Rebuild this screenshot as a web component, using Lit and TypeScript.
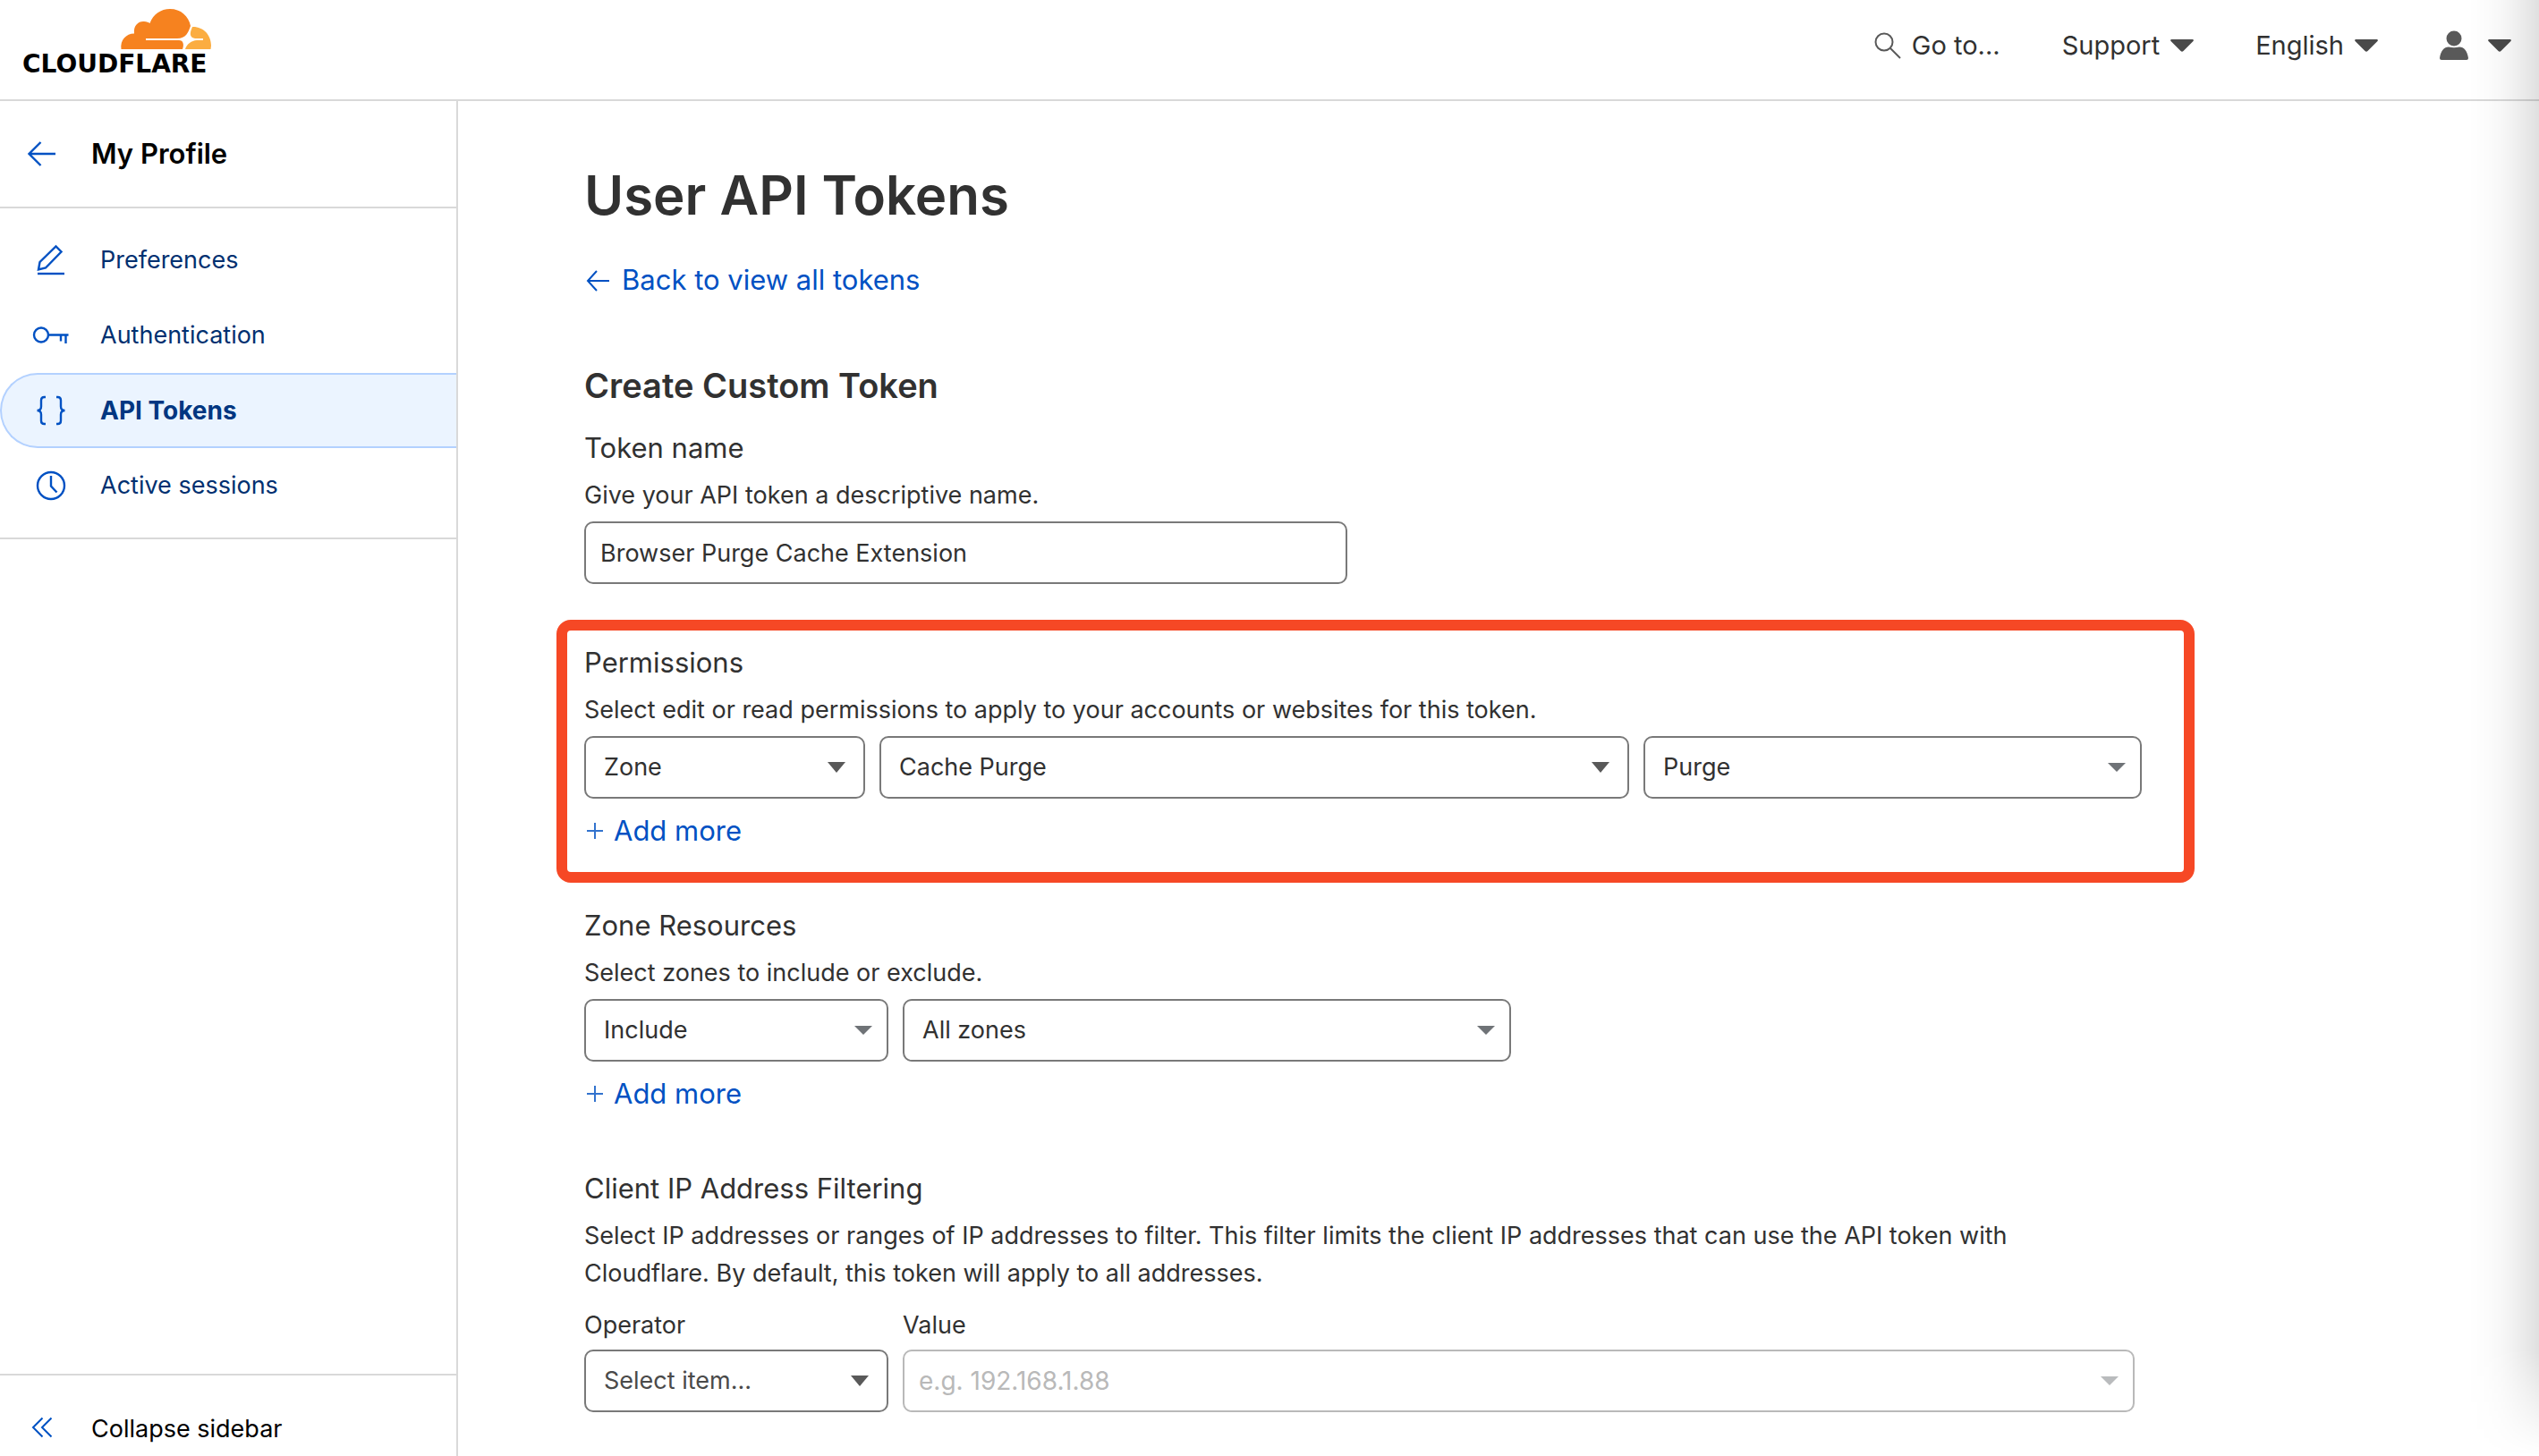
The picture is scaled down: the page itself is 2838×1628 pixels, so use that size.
import { LitElement, html, css, svg, nothing } from "lit";
import { customElement, property, state } from "lit/decorators.js";

const caret = svg`<path d="M0 0H20L10 12Z"/>`;

@customElement("cf-select")
export class CfSelect extends LitElement {
  @property() label = "";
  @property() value = "";
  @property({ attribute: false }) options: string[] = [];
  @property({ type: Boolean, reflect: true }) soft = false;
  @property({ type: Boolean, reflect: true }) caption = false;
  @property({ type: Boolean, reflect: true }) placeholder = false;

  static styles = css`
    :host {
      display: block;
      min-width: 0;
    }
    .label {
      display: block;
      line-height: 42px;
      margin-bottom: 6px;
    }
    .box {
      display: grid;
      align-items: center;
    }
    .select {
      grid-area: 1 / 1;
      appearance: none;
      box-sizing: border-box;
      width: 100%;
      height: 70px;
      margin: 0;
      padding: 0 60px 0 20px;
      border: 2px solid #797979;
      border-radius: 10px;
      background: #fff;
      color: #313131;
      font: inherit;
    }
    :host([placeholder]) .select {
      color: #4a4a4a;
    }
    .caret {
      grid-area: 1 / 1;
      justify-self: end;
      width: 20px;
      height: 12px;
      margin-right: 22px;
      fill: #595959;
      pointer-events: none;
    }
    :host([soft]) .caret {
      height: 10px;
      margin-right: 18px;
      fill: #6f7377;
    }
  `;

  render() {
    return html`
      ${this.caption ? html`<label class="label" for="field">${this.label}</label>` : nothing}
      <div class="box">
        <select class="select" id="field" aria-label=${this.label}>
          ${[this.value, ...this.options].map((o) => html`<option ?selected=${o === this.value}>${o}</option>`)}
        </select>
        <svg class="caret" viewBox="0 0 20 12" preserveAspectRatio="none" aria-hidden="true">${caret}</svg>
      </div>
    `;
  }
}

const navIcons = {
  pen: svg`<path d="M10 30.500l1.500-8.500L29.500 4.500l6 6L18 28.500z"/><path d="M9 35h30"/>`,
  key: svg`<circle cx="13" cy="19.500" r="8"/><path d="M21 19.500h22.500M35 19.500v7M40.500 19.500v9.500"/>`,
  braces: svg`<path d="M18 5h-1.500c-2.500 0-3.500 1.500-3.500 3.500v7c0 3-1.500 4.500-4.500 4.500 3 0 4.500 1.500 4.500 4.500v7c0 2 1 3.500 3.500 3.500H18M30 5h1.500c2.500 0 3.500 1.500 3.500 3.500v7c0 3 1.500 4.500 4.500 4.500-3 0-4.500 1.500-4.500 4.500v7c0 2-1 3.500-3.500 3.500H30"/>`,
  clock: svg`<circle cx="24" cy="20" r="15"/><path d="M24 9v11.500l6.500 7"/>`,
};

@customElement("app-root")
export class AppRoot extends LitElement {
  @state() private active = "API Tokens";

  private nav = [
    { label: "Preferences", icon: navIcons.pen },
    { label: "Authentication", icon: navIcons.key },
    { label: "API Tokens", icon: navIcons.braces },
    { label: "Active sessions", icon: navIcons.clock },
  ];

  static styles = css`
    :host {
      display: block;
      font-family: Inter, "Liberation Sans", sans-serif;
      font-size: 27px;
      line-height: 42px;
      color: #313131;
    }
    .page {
      position: relative;
      display: flex;
      flex-direction: column;
      height: 100vh;
      overflow: hidden;
      background: #fff;
    }
    .edge {
      position: absolute;
      inset: 0 0 0 auto;
      width: 80px;
      background: linear-gradient(to left, rgba(0, 0, 0, 0.12), rgba(0, 0, 0, 0.065) 30%, rgba(0, 0, 0, 0.035) 48%, rgba(0, 0, 0, 0.012) 72%, transparent);
      mask-image: linear-gradient(to top, transparent, #000 120px);
      pointer-events: none;
    }
    h1, h2, h3, p {
      margin: 0;
    }
    a {
      color: #0051c3;
      text-decoration: none;
    }
    button {
      margin: 0;
      padding: 0;
      border: 0;
      background: none;
      color: inherit;
      font: inherit;
      text-align: left;
    }
    .topbar {
      display: flex;
      justify-content: space-between;
      height: 111px;
      flex: none;
      border-bottom: 2px solid #d9d9d9;
    }
    .logo {
      display: block;
      width: 226px;
      height: 96px;
      margin-left: 24px;
    }
    .wordmark {
      font-family: "DejaVu Sans", sans-serif;
      font-size: 28px;
      font-weight: 700;
      fill: #000;
    }
    .tools {
      display: flex;
      align-items: center;
      height: 101px;
      padding-right: 31px;
    }
    .tool {
      display: flex;
      align-items: center;
      gap: 12px;
      font-size: 29px;
    }
    .tool + .tool {
      margin-left: 69px;
    }
    .search {
      width: 30px;
      height: 30px;
      fill: none;
      stroke: #595959;
      stroke-width: 2;
    }
    .drop {
      width: 26px;
      height: 14px;
      fill: #4a4a4a;
    }
    .person {
      width: 32px;
      height: 34px;
      margin-right: 10px;
      fill: #595959;
    }
    .body {
      display: flex;
      flex: 1;
      min-height: 0;
    }
    .sidebar {
      display: flex;
      flex-direction: column;
      flex: none;
      box-sizing: border-box;
      width: 512px;
      border-right: 2px solid #d9d9d9;
      color: #000;
    }
    .back {
      display: flex;
      align-items: center;
      gap: 38px;
      height: 118px;
      padding-left: 30px;
      border-bottom: 2px solid #d9d9d9;
      color: #000;
      font-size: 31px;
      font-weight: 600;
    }
    .line {
      fill: none;
      stroke: #0051c3;
      stroke-width: 2;
    }
    .back .line {
      width: 34px;
      height: 32px;
      stroke-width: 2.4;
    }
    .nav {
      padding: 16px 0;
      border-bottom: 2px solid #d9d9d9;
    }
    .item {
      display: flex;
      align-items: center;
      gap: 31px;
      box-sizing: border-box;
      height: 84px;
      padding-left: 31px;
      border: 2px solid transparent;
      border-right: 0;
      border-radius: 42px 0 0 42px;
      color: #003070;
    }
    .item.current {
      border-color: #b3d1ff;
      background: #ebf4ff;
      color: #003681;
      font-size: 28px;
      font-weight: 700;
    }
    .item .line {
      width: 48px;
      height: 40px;
      stroke-width: 2.4;
    }
    .collapse {
      display: flex;
      gap: 43px;
      margin-top: auto;
      padding: 39px 0 9px 35px;
      border-top: 2px solid #d9d9d9;
    }
    .collapse .line {
      width: 24px;
      height: 24px;
      margin-top: 7px;
    }
    .main {
      flex: 1;
      min-width: 0;
      overflow: hidden;
      padding: 65px 141px 0;
    }
    .title {
      font-size: 60px;
      line-height: 80px;
      font-weight: 600;
    }
    .link {
      display: flex;
      align-items: center;
      gap: 12px;
      width: fit-content;
      font-size: 31px;
      line-height: 48px;
      color: #0051c3;
    }
    .return {
      margin-top: 31px;
    }
    .arrow {
      width: 28px;
      height: 26px;
      margin-left: 2px;
    }
    .subtitle {
      margin-top: 64px;
      font-size: 38px;
      line-height: 60px;
      font-weight: 600;
    }
    .group {
      position: relative;
      max-width: 1741px;
      margin-top: 58px;
    }
    .group.first {
      margin: 16px 0 64px;
    }
    .heading {
      display: block;
      margin-bottom: 8px;
      font-size: 31px;
      line-height: 48px;
      font-weight: 400;
    }
    .help {
      max-width: 1700px;
      margin-bottom: 8px;
    }
    .text {
      display: block;
      box-sizing: border-box;
      width: 49%;
      height: 70px;
      margin: 0;
      padding: 0 16px;
      border: 2px solid #797979;
      border-radius: 10px;
      background: #fff;
      color: #313131;
      font: inherit;
    }
    .row {
      display: grid;
      gap: 16px;
    }
    .row.three {
      grid-template-columns: 314fr 838fr 557fr;
    }
    .row.two {
      grid-template-columns: 340fr 680fr;
      max-width: 1036px;
    }
    .row.wide {
      grid-template-columns: 340fr 1377fr;
      max-width: 1733px;
      margin-top: 16px;
    }
    .add {
      margin-top: 12px;
    }
    .plus {
      width: 18px;
      height: 18px;
      margin-left: 3px;
      opacity: 0.8;
    }
    .frame {
      position: absolute;
      inset: -24px -59px -34px -31px;
      border: 12px solid #f64825;
      border-radius: 16px;
      pointer-events: none;
    }
    .caption {
      display: block;
      margin-bottom: 6px;
    }
    .combo {
      display: grid;
      align-items: center;
    }
    .combo > * {
      grid-area: 1 / 1;
    }
    .combo .text {
      width: 100%;
      border-color: #b9b9b9;
      font-size: 28px;
    }
    .text::placeholder {
      color: #b9b9b9;
      opacity: 1;
    }
    .combo .mark {
      justify-self: end;
      width: 20px;
      height: 10px;
      margin-right: 18px;
      fill: #b9bbbd;
    }
  `;

  private drop() {
    return html`<svg class="drop" viewBox="0 0 26 14" aria-hidden="true">
      <path d="M1 0h24q1.500 0.500 0.500 2L14.500 13q-1.500 1.500-3 0L0.500 2Q-0.500 0.500 1 0z" />
    </svg>`;
  }

  private addMore() {
    return html`<button class="link add" type="button">
      <svg class="line plus" viewBox="0 0 18 18" aria-hidden="true"><path d="M9 0v18M0 9h18" /></svg>Add more
    </button>`;
  }

  render() {
    return html`
      <div class="page">
        <header class="topbar">
          <a href="#" aria-label="Cloudflare">
            <svg class="logo" viewBox="0 0 226 96" aria-hidden="true">
              <path fill="#f6821f" d="M111.500 55C110 45 117 37.500 126 37.500C125 28 131 23.500 137 24C140 24 142 25 143.500 26C147 16 156 10 166 10C178 10 187 18 189 29C186.500 36 184 43 174 43H139V45H176C181 45 182 50 180 55Z"/>
              <path fill="#fbad41" d="M191 30C203 29.500 212 39 212 51L211.500 55H183C185 49 190 45.500 196 45H203V43H194C189 42 188 39 189.500 34Z"/>
              <text class="wordmark" x="1" y="81">CLOUDFLARE</text>
            </svg>
          </a>
          <div class="tools">
            <button class="tool" type="button">
              <svg class="search" viewBox="0 0 30 30" aria-hidden="true"><circle cx="11" cy="11" r="9.500" /><path d="M18 18l11 11" /></svg>Go to...
            </button>
            <button class="tool" type="button">Support ${this.drop()}</button>
            <button class="tool" type="button">English ${this.drop()}</button>
            <button class="tool" type="button" aria-label="Account">
              <svg class="person" viewBox="0 0 32 34" aria-hidden="true">
                <circle cx="16" cy="9" r="8.500" /><path d="M0 31C1 23 5 18.500 10 18.500Q16 20 22 18.500C27 18.500 31 23 32 31Q32 33 30 33H2Q0 33 0 31z" />
              </svg>${this.drop()}
            </button>
          </div>
        </header>
        <div class="body">
          <aside class="sidebar">
            <a class="back" href="#">
              <svg class="line" viewBox="0 0 34 32" aria-hidden="true"><path d="M15.500 3L2.500 16l13 13M2.500 16H32" /></svg>My Profile
            </a>
            <nav class="nav">
              ${this.nav.map(
                (n) => html`<a class=${n.label === this.active ? "item current" : "item"} href="#" @click=${() => (this.active = n.label)}>
                  <svg class="line" viewBox="0 0 48 40" aria-hidden="true">${n.icon}</svg>${n.label}
                </a>`
              )}
            </nav>
            <button class="collapse" type="button">
              <svg class="line" viewBox="0 0 24 24" aria-hidden="true"><path d="M12.500 1.500L2 12l10.500 10.500M22.500 1.500L12 12l10.500 10.500" /></svg>Collapse sidebar
            </button>
          </aside>
          <main class="main">
            <h1 class="title">User API Tokens</h1>
            <a class="link return" href="#">
              <svg class="line arrow" viewBox="0 0 28 26" aria-hidden="true"><path d="M12 3L2 14l10 11M2 14h24" /></svg>Back to view all tokens
            </a>
            <h2 class="subtitle">Create Custom Token</h2>
            <section class="group first">
              <label class="heading" for="name">Token name</label>
              <p class="help">Give your API token a descriptive name.</p>
              <input class="text" id="name" type="text" value="Browser Purge Cache Extension" />
            </section>
            <section class="group">
              <h3 class="heading">Permissions</h3>
              <p class="help">Select edit or read permissions to apply to your accounts or websites for this token.</p>
              <div class="row three">
                <cf-select label="Scope" value="Zone"></cf-select>
                <cf-select label="Permission" value="Cache Purge"></cf-select>
                <cf-select soft label="Access" value="Purge"></cf-select>
              </div>
              ${this.addMore()}
              <div class="frame"></div>
            </section>
            <section class="group">
              <h3 class="heading">Zone Resources</h3>
              <p class="help">Select zones to include or exclude.</p>
              <div class="row two">
                <cf-select soft label="Rule" value="Include"></cf-select>
                <cf-select soft label="Zones" value="All zones"></cf-select>
              </div>
              ${this.addMore()}
            </section>
            <section class="group">
              <h3 class="heading">Client IP Address Filtering</h3>
              <p class="help">
                Select IP addresses or ranges of IP addresses to filter. This filter limits the client IP addresses that can use the API token with
                Cloudflare. By default, this token will apply to all addresses.
              </p>
              <div class="row wide">
                <cf-select caption placeholder label="Operator" value="Select item..."></cf-select>
                <div>
                  <label class="caption" for="value">Value</label>
                  <div class="combo">
                    <input class="text" id="value" type="text" placeholder="e.g. 192.168.1.88" disabled />
                    <svg class="mark" viewBox="0 0 20 12" preserveAspectRatio="none" aria-hidden="true">${caret}</svg>
                  </div>
                </div>
              </div>
            </section>
          </main>
        </div>
        <div class="edge"></div>
      </div>
    `;
  }
}
